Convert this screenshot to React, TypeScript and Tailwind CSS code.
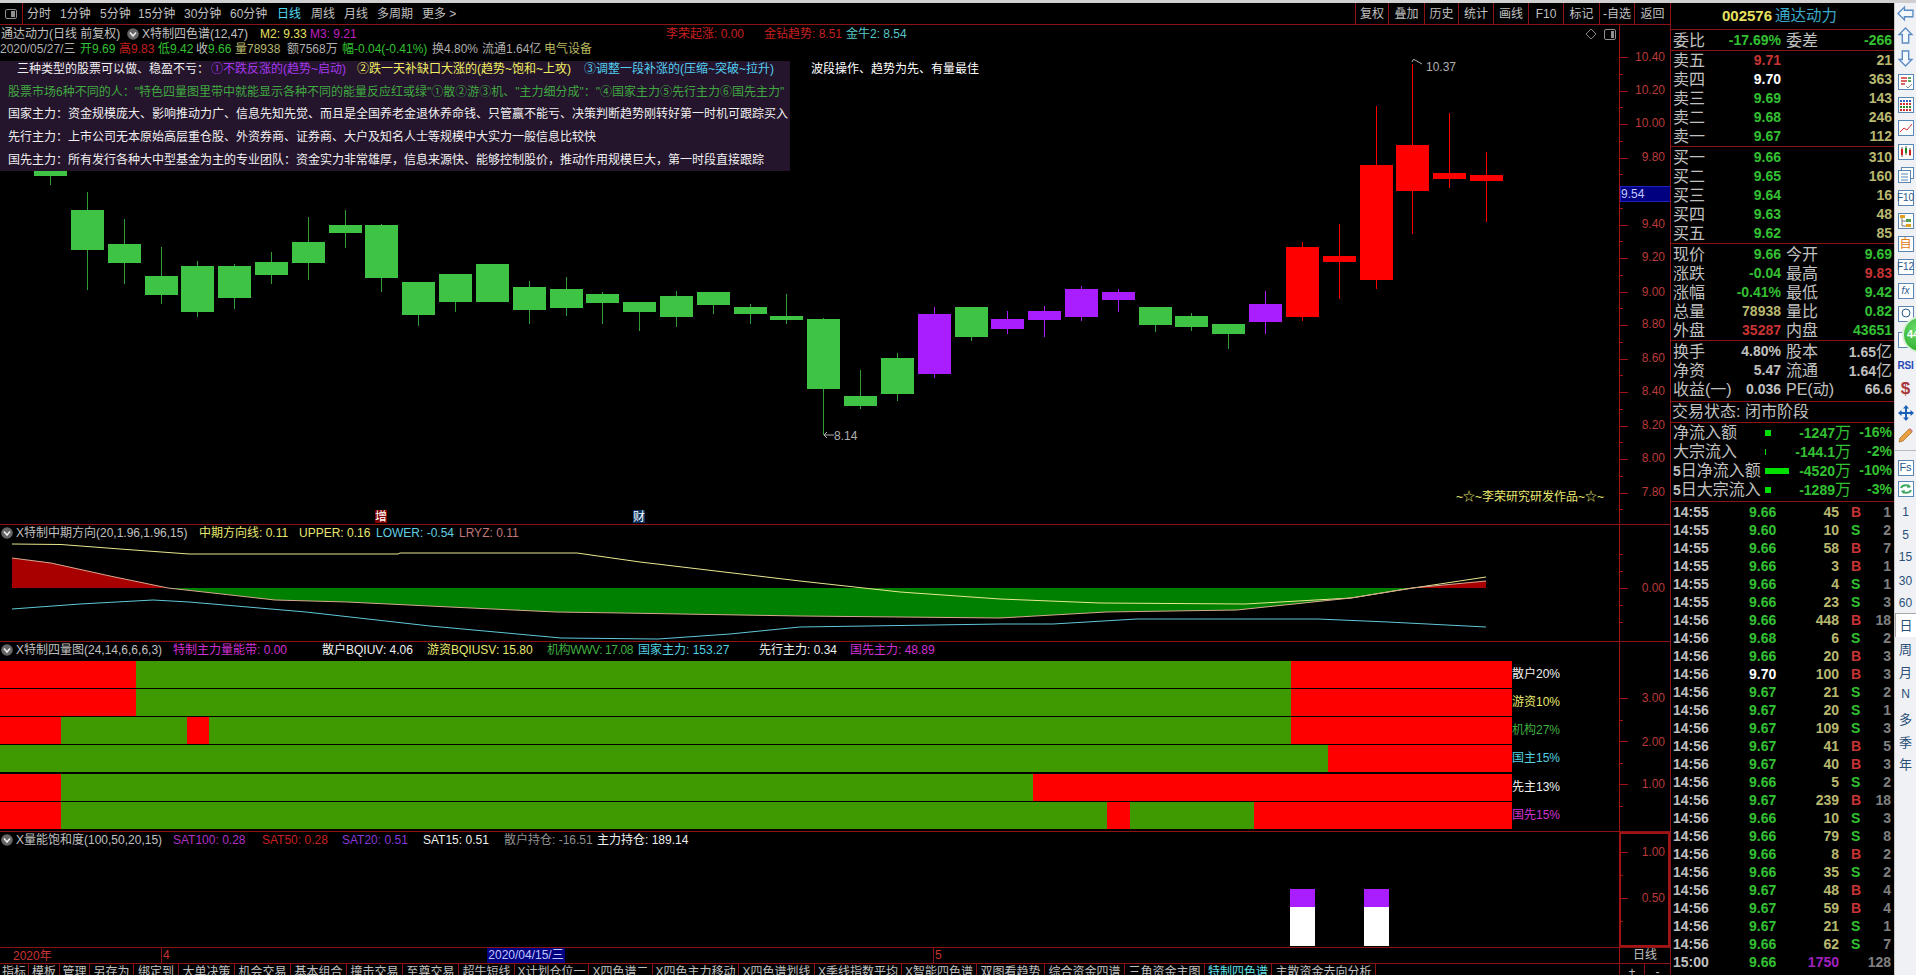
import React from "react";

const C: [number, number, number, number, number, string][] = [
  [34, 171, 176, 165, 185, "g"], [71, 210, 250, 192, 290, "g"], [108, 244, 263, 219, 284, "g"], [145, 276, 295, 247, 304, "g"],
  [181, 266, 312, 261, 317, "g"], [218, 266, 298, 264, 309, "g"], [255, 262, 275, 252, 284, "g"], [292, 242, 263, 217, 280, "g"],
  [329, 225, 233, 210, 248, "g"], [365, 225, 278, 224, 292, "g"], [402, 282, 315, 282, 326, "g"], [439, 274, 302, 274, 312, "g"],
  [476, 264, 302, 264, 302, "g"], [513, 287, 310, 281, 324, "g"], [550, 289, 308, 277, 316, "g"], [586, 294, 303, 292, 324, "g"],
  [623, 302, 312, 302, 331, "g"], [660, 296, 317, 291, 327, "g"], [697, 292, 305, 292, 314, "g"], [734, 307, 314, 304, 324, "g"],
  [770, 316, 320, 294, 324, "g"], [807, 319, 389, 318, 435, "g"], [844, 396, 406, 370, 409, "g"], [881, 358, 394, 353, 401, "g"],
  [918, 314, 374, 307, 378, "p"], [955, 307, 337, 307, 341, "g"], [991, 319, 329, 311, 334, "p"], [1028, 311, 320, 306, 337, "p"],
  [1065, 289, 317, 286, 321, "p"], [1102, 292, 300, 289, 312, "p"], [1139, 307, 325, 307, 332, "g"], [1175, 316, 327, 313, 331, "g"],
  [1212, 324, 334, 324, 349, "g"], [1249, 304, 322, 291, 334, "p"], [1286, 247, 317, 242, 321, "r"], [1323, 256, 262, 224, 299, "r"],
  [1360, 165, 280, 106, 289, "r"], [1396, 145, 191, 64, 234, "r"], [1433, 173, 179, 113, 188, "r"], [1470, 175, 181, 152, 222, "r"],
];
const COL: Record<string, string> = { g: "#3fc345", p: "#a81eff", r: "#ff0000" };

const UP = "M12,544 61,544.5 120,549 189,554 398,554 400,553 577,553 640,562 800,581 900,592 1000,599 1100,603 1245,604 1351,598 1400,590 1486,577";
const MID = "M12,558 51,563 110,576 168,588 275,600 347,602 450,607 556,612 622,613 800,616 1000,618 1106,612 1237,610 1351,598 1412,588 1486,581";
const LOW = "M12,609 80,604 153,600 189,602 306,612 430,626 561,638 658,639 730,634 800,627 1000,624 1053,624 1137,619 1318,619 1388,622 1486,627";

const BARS: [string, number][][] = [
  [["r", 136], ["g", 1155], ["r", 221]],
  [["r", 136], ["g", 1155], ["r", 221]],
  [["r", 61], ["g", 126], ["r", 22], ["g", 1082], ["r", 221]],
  [["g", 1328], ["r", 184]],
  [["r", 61], ["g", 972], ["r", 479]],
  [["r", 61], ["g", 1046], ["r", 23], ["g", 124], ["r", 258]],
];
const BAR_LABELS: [string, string, string][] = [
  ["散户20%", "text-[#f0f0f0]", "mb-[1px]"],
  ["游资10%", "text-[#e8e870]", "mb-[1px]"],
  ["机构27%", "text-[#40b040]", "mb-[1px]"],
  ["国主15%", "text-[#50d0e0]", "mb-[2px]"],
  ["先主13%", "text-[#f0f0f0]", "mb-[1px]"],
  ["国先15%", "text-[#d030d0]", ""],
];

const TABS: [string, number, boolean?][] = [
  ["指标", 29], ["模板", 31], ["管理", 30], ["另存为", 44], ["绑定到", 45], ["大单决策", 56], ["机会交易", 56], ["基本组合", 56],
  ["撞击交易", 56], ["至尊交易", 56], ["超牛短线", 56], ["X计划仓位一", 74], ["X四色谱二", 64], ["X四色主力移动", 86], ["X四色谱划线", 76],
  ["X季线指数平均", 87], ["X智能四色谱", 75], ["双图看趋势", 68], ["综合资金四谱", 80], ["三角资金主图", 80], ["特制四色谱", 67, true], ["主散资金去向分析", 104],
];

const TRADES: [string, string, string, string, string][] = [
  ["14:55", "9.66", "45", "B", "1"], ["14:55", "9.60", "10", "S", "2"], ["14:55", "9.66", "58", "B", "7"], ["14:55", "9.66", "3", "B", "1"],
  ["14:55", "9.66", "4", "S", "1"], ["14:55", "9.66", "23", "S", "3"], ["14:56", "9.66", "448", "B", "18"], ["14:56", "9.68", "6", "S", "2"],
  ["14:56", "9.66", "20", "B", "3"], ["14:56", "9.70", "100", "B", "3"], ["14:56", "9.67", "21", "S", "2"], ["14:56", "9.67", "20", "S", "1"],
  ["14:56", "9.67", "109", "S", "3"], ["14:56", "9.67", "41", "B", "5"], ["14:56", "9.67", "40", "B", "3"], ["14:56", "9.66", "5", "S", "2"],
  ["14:56", "9.67", "239", "B", "18"], ["14:56", "9.66", "10", "S", "3"], ["14:56", "9.66", "79", "S", "8"], ["14:56", "9.66", "8", "B", "2"],
  ["14:56", "9.66", "35", "S", "2"], ["14:56", "9.67", "48", "B", "4"], ["14:56", "9.67", "59", "B", "4"], ["14:56", "9.67", "21", "S", "1"],
  ["14:56", "9.66", "62", "S", "7"], ["15:00", "9.66", "1750", "", "128"],
];

const GREEN = "text-[#33c033]";
const RED = "text-[#c83434]";
const YEL = "text-[#b8b870]";
const GRAY = "text-[#c0c0c0]";

function Axis({ top, h, labels, ticks, active, children }: { top: number; h: number; labels: [number, string][]; ticks: [number, boolean][]; active?: boolean; children?: React.ReactNode }) {
  return (
    <svg width="51" height={h} viewBox={`1619 ${top} 51 ${h}`} className="shrink-0" shapeRendering="crispEdges">
      <line x1="1619.5" x2="1619.5" y1={top} y2={top + h} stroke="#a01414" />
      {ticks.map(([y, major]) => (
        <line key={y} x1="1620" x2={major ? 1628 : 1623} y1={y + 0.5} y2={y + 0.5} stroke="#a01414" />
      ))}
      {labels.map(([y, t]) => (
        <text key={t} x="1665" y={y + 4} textAnchor="end" className="fill-[#b83a3a] text-[12px]" shapeRendering="auto">{t}</text>
      ))}
      {active && <rect x="1620" y={top + 1} width="49" height={h - 2} fill="none" stroke="#a01414" strokeWidth="2" />}
      {children}
    </svg>
  );
}

function Chevron() {
  return (
    <svg width="12" height="12" viewBox="0 0 12 12" className="shrink-0">
      <circle cx="6" cy="6" r="5.8" fill="#666" />
      <path d="M3 4.5 6 8 9 4.5" fill="none" stroke="#eee" strokeWidth="1.6" />
    </svg>
  );
}

function Row4({ a, b, c, d, bc, dc }: { a: string; b: React.ReactNode; c?: string; d?: React.ReactNode; bc: string; dc: string }) {
  return (
    <div className="flex h-[19px] items-center pl-[2px] text-[16px] leading-[19px] whitespace-nowrap">
      <span className={`w-[48px] ${GRAY}`}>{a}</span>
      <span className={`w-[60px] text-right text-[14px] font-bold ${bc}`}>{b}</span>
      <span className={`w-[53px] pl-[5px] ${GRAY}`}>{c}</span>
      <span className={`w-[58px] text-right text-[14px] font-bold ${dc}`}>{d}</span>
    </div>
  );
}

const Yi = () => <span className="text-[16px] font-normal">亿</span>;
const Wan = () => <span className="text-[16px] font-normal">万</span>;

function MoneyRow({ a, bar, v, p }: { a: React.ReactNode; bar: string; v: React.ReactNode; p: string }) {
  return (
    <div className="flex h-[19px] items-center pl-[2px] text-[16px] leading-[19px] whitespace-nowrap">
      <span className={`w-[92px] ${GRAY}`}>{a}</span>
      <span className="flex w-[24px] items-center">
        <span className={`h-[6px] bg-[#00e000] ${bar}`} />
      </span>
      <span className={`w-[62px] text-right text-[14px] font-bold ${GREEN}`}>{v}</span>
      <span className={`w-[41px] text-right text-[14px] font-bold ${GREEN}`}>{p}</span>
    </div>
  );
}

function Box({ children }: { children: React.ReactNode }) {
  return <div className="flex h-[16px] w-[16px] items-center justify-center border border-[#5a86b4] bg-white text-[10px] leading-none text-[#2a5a90]">{children}</div>;
}

const Arrow = ({ d }: { d: string }) => (
  <svg width="17" height="17" viewBox="0 0 16 16"><path d={d} fill="#f4f8fc" stroke="#5a8cc4" strokeWidth="1.3" /></svg>
);

const S = ({ c, children }: { c: string; children: React.ReactNode }) => (
  <div className={`flex items-center justify-center ${c}`}>{children}</div>
);

function Side() {
  return (
    <div className="relative flex w-[22px] shrink-0 flex-col border-l border-[#c8c8c8] bg-[#eff1f5] text-[#2a4f78]">
      <S c="h-[21px]"><Arrow d="M1 8 7 2V5H15V11H7V14Z" /></S>
      <S c="h-[23.2px]"><Arrow d="M8 1 14 7H11V15H5V7H2Z" /></S>
      <S c="h-[23.2px]"><Arrow d="M8 15 14 9H11V1H5V9H2Z" /></S>
      <S c="h-[23.2px]"><svg width="16" height="16" viewBox="0 0 16 16"><rect x=".5" y=".5" width="15" height="15" fill="#fff" stroke="#5a86b4" /><path d="M3 4h6M3 7h6M3 10h4" stroke="#d03030" strokeWidth="1.4" /><path d="M10 4h3M10 7h3" stroke="#2a8a2a" strokeWidth="1.4" /><path d="m8 12 2 2 4-4" stroke="#888" fill="none" /></svg></S>
      <S c="h-[23.2px]"><svg width="16" height="16" viewBox="0 0 16 16"><rect x=".5" y=".5" width="15" height="15" fill="#fff" stroke="#5a86b4" /><path d="M2 4h12" stroke="#3060c0" strokeWidth="2" strokeDasharray="2 1" /><path d="M2 7h12" stroke="#d03030" strokeWidth="2" strokeDasharray="2 1" /><path d="M2 10h12" stroke="#2a8a2a" strokeWidth="2" strokeDasharray="2 1" /><path d="M2 13h12" stroke="#d03030" strokeWidth="2" strokeDasharray="2 1" /></svg></S>
      <S c="h-[23.2px]"><svg width="16" height="16" viewBox="0 0 16 16"><rect x=".5" y=".5" width="15" height="15" fill="#fff" stroke="#5a86b4" /><path d="m2 12 4-4 3 2 5-6" fill="none" stroke="#d03030" /></svg></S>
      <S c="h-[23.2px]"><svg width="16" height="16" viewBox="0 0 16 16"><rect x=".5" y=".5" width="15" height="15" fill="#fff" stroke="#5a86b4" /><path d="M4 3v10M8 2v9M12 4v8" stroke="#555" /><rect x="3" y="5" width="2" height="6" fill="#d02020" /><rect x="7" y="4" width="2" height="5" fill="#208a20" /><rect x="11" y="6" width="2" height="5" fill="#d02020" /></svg></S>
      <S c="h-[23.2px]"><svg width="16" height="16" viewBox="0 0 16 16"><rect x="3.5" y=".5" width="12" height="11" fill="#fff" stroke="#5a86b4" /><rect x=".5" y="3.5" width="12" height="12" fill="#fff" stroke="#5a86b4" /><path d="M3 7h7M3 10h7M3 13h7" stroke="#5a86b4" /></svg></S>
      <S c="h-[23.2px]"><Box>F10</Box></S>
      <S c="h-[23.2px]"><svg width="16" height="16" viewBox="0 0 16 16"><rect x=".5" y=".5" width="15" height="15" fill="#fff" stroke="#5a86b4" /><rect x="2" y="2" width="5" height="3" fill="#e0a020" /><rect x="8" y="6" width="5" height="3" fill="#50a050" /><rect x="8" y="11" width="5" height="3" fill="#e0a020" /><path d="M4 5v8h4M4 8h4" fill="none" stroke="#777" /></svg></S>
      <S c="h-[23.2px]"><div className="flex h-[16px] w-[16px] items-center justify-center border border-[#5a86b4] bg-white text-[12px] leading-none text-[#e07a10]">自</div></S>
      <S c="h-[23.2px]"><Box>F12</Box></S>
      <S c="h-[23.2px]"><Box><span className="italic">fx</span></Box></S>
      <S c="h-[23.2px]"><svg width="16" height="16" viewBox="0 0 16 16"><rect x=".5" y=".5" width="15" height="15" fill="#fff" stroke="#5a86b4" /><circle cx="8" cy="7" r="4" fill="none" stroke="#2a5a90" /></svg></S>
      <S c="h-[30px]"><svg width="16" height="16" viewBox="0 0 16 16"><rect x=".5" y=".5" width="15" height="15" fill="#fff" stroke="#5a86b4" /></svg></S>
      <S c="h-[21px]"><span className="text-[10px] font-bold leading-none tracking-[-0.3px] text-[#2848b8]">RSI</span></S>
      <S c="h-[25px]"><span className="text-[17px] font-bold leading-none text-[#a83838]">$</span></S>
      <S c="h-[24px]"><svg width="16" height="16" viewBox="0 0 16 16"><path d="M8 0 11 3.5H9V7H12.500V5L16 8 12.500 11V9H9V12.500H11L8 16 5 12.500H7V9H3.500V11L0 8 3.500 5V7H7V3.500H5Z" fill="#1b5fb8" /></svg></S>
      <S c="h-[20px]"><svg width="16" height="16" viewBox="0 0 16 16"><path d="M1 15 2 11 11 2 14 5 5 14Z" fill="#e8a040" stroke="#a06a20" strokeWidth=".7" /><path d="m11 2 1-1 3 3-1 1Z" fill="#d08080" /></svg></S>
      <div className="my-[5px] h-[1px] w-full bg-[#b8b8b8]" />
      <S c="h-[23px]"><Box><span className="text-[11px]">Fs</span></Box></S>
      <S c="h-[20px]"><svg width="16" height="16" viewBox="0 0 16 16"><rect x=".5" y=".5" width="15" height="15" fill="#fff" stroke="#5a86b4" /><path d="M3 7a5 4 0 0 1 9-1M13 9a5 4 0 0 1-9 1" fill="none" stroke="#40a860" strokeWidth="2" /><path d="m10 3 3 3-4 1ZM6 13 3 10l4-1Z" fill="#40a860" /></svg></S>
      <S c="h-[26px] text-[12px]">1</S>
      <S c="h-[20px] text-[12px]">5</S>
      <S c="h-[24px] text-[12px]">15</S>
      <S c="h-[24px] text-[12px]">30</S>
      <S c="h-[20px] text-[12px]">60</S>
      <S c="h-[24px] border-t border-l border-[#a8a8a8] bg-white text-[13px]">日</S>
      <S c="h-[24px] text-[13px]">周</S>
      <S c="h-[22px] text-[13px]">月</S>
      <S c="h-[22px] text-[12px]">N</S>
      <S c="h-[28px] text-[13px]">多</S>
      <S c="h-[18px] text-[13px]">季</S>
      <S c="h-[26px] text-[13px]">年</S>
      <div className="absolute top-[313px] left-[7px] flex h-[37px] w-[37px] items-center rounded-full border-2 border-[#d8f0d8] bg-[radial-gradient(circle_at_40%_35%,#6fdc6f,#18a018)] pl-[3px] text-[11px] font-bold text-white">44</div>
    </div>
  );
}

function App() {
  const mainLabels: [number, string][] = [[57, "10.40"], [90, "10.20"], [123, "10.00"], [157, "9.80"], [224, "9.40"], [257, "9.20"], [292, "9.00"], [324, "8.80"], [358, "8.60"], [391, "8.40"], [425, "8.20"], [458, "8.00"], [492, "7.80"]];
  const mainTicks: [number, boolean][] = [];
  for (let i = 0; i < 28; i++) mainTicks.push([Math.round(57 + i * 16.75), i % 2 === 0]);

  return (
    <div className="flex h-[975px] w-[1916px] flex-col overflow-hidden bg-black font-['Liberation_Sans','Noto_Sans_CJK_SC',sans-serif] text-[12px] text-[#c0c0c0]">
      <div className="h-[3px] shrink-0 bg-[#cfcfcf]" />
      <div className="flex min-h-0 flex-1">
        {/* left */}
        <div className="flex w-[1670px] shrink-0 flex-col">
          {/* toolbar */}
          <div className="flex h-[22px] shrink-0 items-center border-b border-[#8c1414] whitespace-nowrap">
            <div className="flex h-full w-[23px] items-center justify-center border-r border-[#8c1414]">
              <div className="flex h-[10px] w-[12px] justify-end rounded-[2px] border border-[#909090]"><span className="m-[1px] w-[4px] bg-[#909090]" /></div>
            </div>
            <div className="flex flex-1 items-center pl-[4px]">
              <span className="w-[33px]">分时</span><span className="w-[40px]">1分钟</span><span className="w-[38px]">5分钟</span><span className="w-[46px]">15分钟</span><span className="w-[46px]">30分钟</span><span className="w-[47px]">60分钟</span>
              <span className="w-[34px] text-[#50d8f0]">日线</span><span className="w-[33px]">周线</span><span className="w-[33px]">月线</span><span className="w-[45px]">多周期</span><span>更多 &gt;</span>
            </div>
            <div className="flex h-full items-center text-center">
              {[["复权", "w-[33px]"], ["叠加", "w-[36px]"], ["历史", "w-[34px]"], ["统计", "w-[35px]"], ["画线", "w-[35px]"], ["F10", "w-[35px]"], ["标记", "w-[36px]"], ["-自选", "w-[35px]"], ["返回", "w-[36px]"]].map(([t, w]) => (
                <span key={t} className={`flex h-full items-center justify-center border-l border-[#8c1414] ${w}`}>{t}</span>
              ))}
            </div>
          </div>

          {/* main panel */}
          <div className="flex h-[500px] shrink-0 border-b border-[#8c1414]">
            <div className="relative w-[1619px] overflow-hidden">
              <svg width="1619" height="499" viewBox="0 25 1619 499" className="absolute inset-0">
                <g shapeRendering="crispEdges">
                  {C.map(([x, t, b, wt, wb, k]) => (
                    <g key={x}>
                      <rect x={x + 16} y={wt} width="1" height={wb - wt} fill={COL[k]} opacity={k === "g" ? 0.8 : 1} />
                      <rect x={x} y={t} width="33" height={b - t} fill={COL[k]} />
                    </g>
                  ))}
                </g>
                <path d="M824 435h10M824 435l3-3M824 435l3 3" stroke="#b0b0b0" fill="none" />
                <text x="834" y="440" className="fill-[#b0b0b0] text-[12px]">8.14</text>
                <path d="M1412 62q1-4 3-2l7 4" stroke="#b0b0b0" fill="none" />
                <text x="1426" y="71" className="fill-[#b0b0b0] text-[12px]">10.37</text>
                <text x="1456" y="501" className="fill-[#e8e870] text-[12px]">~☆~李荣研究研发作品~☆~</text>
                <path d="M1591 29l5 5-5 5-5-5Z" fill="none" stroke="#808080" />
                <rect x="1604.500" y="29.500" width="11" height="10" rx="1.500" fill="none" stroke="#909090" />
                <rect x="1611" y="31" width="3" height="7" fill="#909090" />
                <rect x="375" y="510" width="12" height="13" fill="#800000" />
                <text x="375" y="521" className="fill-white text-[12px]">增</text>
                <rect x="633" y="510" width="12" height="13" fill="#0a3060" />
                <text x="633" y="521" className="fill-white text-[12px]">财</text>
              </svg>
              <div className="relative flex h-[16px] items-center whitespace-nowrap pt-[2px]">
                <span className="w-[127px] pl-[1px]">通达动力(日线 前复权)</span>
                <Chevron />
                <span className="w-[121px] pl-[3px]">X特制四色谱(12,47)</span>
                <span className="w-[50px] text-[#e8e060]">M2: 9.33</span>
                <span className="w-[356px] text-[#c020c0]">M3: 9.21</span>
                <span className="w-[98px] text-[#c82020]">李荣起涨: 0.00</span>
                <span className="w-[82px] text-[#c82020]">金钻趋势: 8.51</span>
                <span className="text-[#58c8c8]">金牛2: 8.54</span>
              </div>
              <div className="relative flex h-[14px] items-center whitespace-nowrap pt-[1px] leading-[14px]">
                <span className="w-[80px] text-[#b0b0b0]">2020/05/27/三</span>
                <span className="w-[39px] text-[#33c033]">开9.69</span>
                <span className="w-[39px] text-[#c82020]"><span>高</span>9.83</span>
                <span className="w-[38px] text-[#33c033]">低9.42</span>
                <span className="w-[39px] text-[#33c033]"><span className="text-[#c0c0c0]">收</span>9.66</span>
                <span className="w-[52px] text-[#b8b870]">量78938</span>
                <span className="w-[55px] text-[#b0b0b0]">额7568万</span>
                <span className="w-[90px] text-[#33c033]">幅-0.04(-0.41%)</span>
                <span className="w-[50px] text-[#b0b0b0]">换4.80%</span>
                <span className="w-[62px] text-[#b0b0b0]">流通1.64亿</span>
                <span className="text-[#b8b860]">电气设备</span>
              </div>
              <div className="relative mt-[6px] flex">
                <div className="flex h-[110px] w-[790px] flex-col gap-[6.7px] bg-[#24142c] pl-[8px] leading-[16px] whitespace-nowrap text-[#f0f0f0]">
                  <div className="flex pl-[9px]">
                    <span className="w-[194px]">{"三种类型的股票可以做、稳盈不亏\uFF1A"}</span>
                    <span className="w-[146px] text-[#a838f0]">①不跌反涨的(趋势~启动)</span>
                    <span className="w-[227px] text-[#f0f060]">②跌一天补缺口大涨的(趋势~饱和~上攻)</span>
                    <span className="text-[#50d0f0]">③调整一段补涨的(压缩~突破~拉升)</span>
                  </div>
                  <div className="text-[#40a840]">{"股票市场6种不同的人\uFF1A\"特色四量图里带中就能显示各种不同的能量反应红或绿\"①散②游③机、\"主力细分成\"\uFF1A\"④国家主力⑤先行主力⑥国先主力\""}</div>
                  <div>{"国家主力\uFF1A资金规模庞大、影响推动力广、信息先知先觉、而且是全国养老金退休养命钱、只管赢不能亏、决策判断趋势刚转好第一时机可跟踪买入"}</div>
                  <div>{"先行主力\uFF1A上市公司无本原始高层重仓股、外资券商、证券商、大户及知名人士等规模中大实力一般信息比较快"}</div>
                  <div>{"国先主力\uFF1A所有发行各种大中型基金为主的专业团队\uFF1A资金实力非常雄厚\uFF0C信息来源快、能够控制股价\uFF0C推动作用规模巨大\uFF0C第一时段直接跟踪"}</div>
                </div>
                <div className="ml-[21px] h-[16px] leading-[16px] whitespace-nowrap text-white">波段操作、趋势为先、有量最佳</div>
              </div>
            </div>
            <Axis top={25} h={499} labels={mainLabels} ticks={mainTicks}>
              <rect x="1620" y="186" width="50" height="15" fill="#000080" stroke="#2020c0" />
              <text x="1621" y="198" className="fill-[#c0c8ff] text-[12px]" shapeRendering="auto">9.54</text>
            </Axis>
          </div>

          {/* panel 2 */}
          <div className="flex h-[117px] shrink-0 border-b border-[#8c1414]">
            <div className="relative w-[1619px]">
              <svg width="1619" height="116" viewBox="0 525 1619 116" className="absolute inset-0">
                <path d="M12,558 51,563 110,576 168,588 12,588Z" fill="#a80000" />
                <path d="M168,588 275,600 347,602 450,607 556,612 622,613 800,616 1000,618 1106,612 1237,610 1351,598 1412,588Z" fill="#008000" />
                <path d="M1412,588 1486,581 1486,588Z" fill="#a80000" />
                <path d={UP} fill="none" stroke="#e8e890" />
                <path d={MID} fill="none" stroke="#d8a890" />
                <path d={LOW} fill="none" stroke="#60c8d8" />
              </svg>
              <div className="relative flex h-[16px] items-center whitespace-nowrap pl-[1px]">
                <Chevron />
                <span className="w-[186px] pl-[3px]">X特制中期方向(20,1.96,1.96,15)</span>
                <span className="w-[100px] text-[#e8e870]">中期方向线: 0.11</span>
                <span className="w-[77px] text-[#e8e870]">UPPER: 0.16</span>
                <span className="w-[83px] text-[#60d0e0]">LOWER: -0.54</span>
                <span className="text-[#c07878]">LRYZ: 0.11</span>
              </div>
            </div>
            <Axis top={525} h={116} labels={[[588, "0.00"]]} ticks={[[554, false], [571, false], [588, true], [605, false], [622, false]]} />
          </div>

          {/* panel 3 */}
          <div className="flex h-[190px] shrink-0 border-b border-[#8c1414]">
            <div className="w-[1619px]">
              <div className="flex h-[16px] items-center whitespace-nowrap pl-[1px]">
                <Chevron />
                <span className="w-[160px] pl-[3px]">X特制四量图(24,14,6,6,6,3)</span>
                <span className="w-[149px] text-[#d030d0]">特制主力量能带: 0.00</span>
                <span className="w-[105px] text-[#f0f0f0]">散户BQIUV: 4.06</span>
                <span className="w-[120px] text-[#e8e870]">游资BQIUSV: 15.80</span>
                <span className="w-[91px] tracking-[-0.4px] text-[#40b040]">机构WWV: 17.08</span>
                <span className="w-[121px] text-[#50d0e0]">国家主力: 153.27</span>
                <span className="w-[91px] text-[#f0f0f0]">先行主力: 0.34</span>
                <span className="text-[#d030d0]">国先主力: 48.89</span>
              </div>
              <div className="mt-[3px] flex flex-col">
                {BARS.map((row, i) => (
                  <div key={i} className={`flex h-[27px] ${BAR_LABELS[i][2]}`}>
                    {row.map(([c, w], j) => (
                      <div key={j} className={c === "r" ? "bg-[#ff0000]" : "bg-[#3f9900]"} style={{ width: w }} />
                    ))}
                    <span className={`leading-[27px] whitespace-nowrap ${BAR_LABELS[i][1]}`}>{BAR_LABELS[i][0]}</span>
                  </div>
                ))}
              </div>
            </div>
            <Axis top={642} h={189} labels={[[698, "3.00"], [742, "2.00"], [784, "1.00"]]} ticks={[[698, true], [720, false], [741, true], [763, false], [784, true], [806, false]]} />
          </div>

          {/* panel 4 */}
          <div className="flex h-[116px] shrink-0 border-b border-[#8c1414]">
            <div className="relative w-[1619px]">
              <svg width="1619" height="115" viewBox="0 832 1619 115" className="absolute inset-0" shapeRendering="crispEdges">
                <rect x="1290" y="889" width="25" height="18" fill="#a81eff" />
                <rect x="1290" y="907" width="25" height="39" fill="#fff" />
                <rect x="1364" y="889" width="25" height="18" fill="#a81eff" />
                <rect x="1364" y="907" width="25" height="39" fill="#fff" />
              </svg>
              <div className="relative flex h-[16px] items-center whitespace-nowrap pl-[1px]">
                <Chevron />
                <span className="w-[160px] pl-[3px]">X量能饱和度(100,50,20,15)</span>
                <span className="w-[89px] text-[#b030c0]">SAT100: 0.28</span>
                <span className="w-[80px] text-[#c82020]">SAT50: 0.28</span>
                <span className="w-[81px] text-[#8a38d8]">SAT20: 0.51</span>
                <span className="w-[81px] text-[#f0f0f0]">SAT15: 0.51</span>
                <span className="w-[93px] text-[#909090]">散户持仓: -16.51</span>
                <span className="text-[#f0f0f0]">主力持仓: 189.14</span>
              </div>
            </div>
            <Axis top={832} h={115} labels={[[852, "1.00"], [898, "0.50"]]} ticks={[[852, true], [875, false], [898, true], [921, false]]} active />
          </div>

          {/* time axis */}
          <div className="flex h-[16px] shrink-0 items-center border-b border-[#8c1414] whitespace-nowrap text-[#c83434]">
            <span className="w-[161px] pl-[13px]">2020年</span>
            <span className="h-full w-[326px] border-l border-[#8c1414] pl-[1px] leading-[15px]">4</span>
            <span className="h-full w-[78px] bg-[#000080] text-center leading-[15px] text-[#c0c8ff]">2020/04/15/三</span>
            <span className="w-[368px]" />
            <span className="h-full w-[686px] border-l border-[#8c1414] pl-[1px] leading-[15px]">5</span>
            <span className="h-full w-[51px] border-l border-[#a01414] text-center leading-[15px] text-[#c0c0c0]">日线</span>
          </div>

          {/* tabs */}
          <div className="flex h-[11px] shrink-0 overflow-hidden leading-[16px] whitespace-nowrap">
            {TABS.map(([t, w, act]) => (
              <span key={t} className={`shrink-0 border-r border-[#8c1414] text-center ${act ? "text-[#60e0e8]" : ""}`} style={{ width: w }}>{t}</span>
            ))}
            <span className="w-[243px]" />
            <span className="w-[26px] border-l border-r border-[#8c1414] text-center">+</span>
            <span className="w-[25px] text-center">-</span>
          </div>
        </div>

        {/* right */}
        <div className="flex w-[224px] shrink-0 flex-col border-l border-[#8c1414]">
          <div className="flex h-[27px] shrink-0 items-center border-b border-[#8c1414] pl-[51px] whitespace-nowrap">
            <span className="w-[53px] text-[15px] font-bold text-[#e8e060]">002576</span>
            <span className="text-[15.500px] text-[#3ca8c8]">通达动力</span>
          </div>
          <div className="flex h-[21px] shrink-0 items-center border-b border-[#8c1414]">
            <Row4 a="委比" b="-17.69%" c="委差" d="-266" bc={GREEN} dc={GREEN} />
          </div>
          <div className="flex h-[96px] shrink-0 flex-col border-b border-[#8c1414]">
            <Row4 a="卖五" b="9.71" d="21" bc={RED} dc={YEL} />
            <Row4 a="卖四" b="9.70" d="363" bc="text-white" dc={YEL} />
            <Row4 a="卖三" b="9.69" d="143" bc={GREEN} dc={YEL} />
            <Row4 a="卖二" b="9.68" d="246" bc={GREEN} dc={YEL} />
            <Row4 a="卖一" b="9.67" d="112" bc={GREEN} dc={YEL} />
          </div>
          <div className="flex h-[97px] shrink-0 flex-col justify-center border-b border-[#8c1414]">
            <Row4 a="买一" b="9.66" d="310" bc={GREEN} dc={YEL} />
            <Row4 a="买二" b="9.65" d="160" bc={GREEN} dc={YEL} />
            <Row4 a="买三" b="9.64" d="16" bc={GREEN} dc={YEL} />
            <Row4 a="买四" b="9.63" d="48" bc={GREEN} dc={YEL} />
            <Row4 a="买五" b="9.62" d="85" bc={GREEN} dc={YEL} />
          </div>
          <div className="flex h-[97px] shrink-0 flex-col justify-center border-b border-[#8c1414]">
            <Row4 a="现价" b="9.66" c="今开" d="9.69" bc={GREEN} dc={GREEN} />
            <Row4 a="涨跌" b="-0.04" c="最高" d="9.83" bc={GREEN} dc={RED} />
            <Row4 a="涨幅" b="-0.41%" c="最低" d="9.42" bc={GREEN} dc={GREEN} />
            <Row4 a="总量" b="78938" c="量比" d="0.82" bc={YEL} dc={GREEN} />
            <Row4 a="外盘" b="35287" c="内盘" d="43651" bc={RED} dc={GREEN} />
          </div>
          <div className="flex h-[61px] shrink-0 flex-col border-b border-[#8c1414] pt-[1px]">
            <Row4 a="换手" b="4.80%" c="股本" d={<>1.65<Yi /></>} bc={GRAY} dc={GRAY} />
            <Row4 a="净资" b="5.47" c="流通" d={<>1.64<Yi /></>} bc={GRAY} dc={GRAY} />
            <Row4 a="收益(一)" b="0.036" c="PE(动)" d="66.6" bc={GRAY} dc={GRAY} />
          </div>
          <div className="flex h-[21px] shrink-0 items-center border-b border-[#8c1414] pl-[1px] text-[16px] whitespace-nowrap">交易状态: 闭市阶段</div>
          <div className="flex h-[79px] shrink-0 flex-col border-b border-[#8c1414]">
            <MoneyRow a="净流入额" bar="w-[6px]" v={<>-1247<Wan /></>} p="-16%" />
            <MoneyRow a="大宗流入" bar="w-[1px]" v={<>-144.1<Wan /></>} p="-2%" />
            <MoneyRow a={<><b className="text-[14px]">5</b>日净流入额</>} bar="w-[24px]" v={<>-4520<Wan /></>} p="-10%" />
            <MoneyRow a={<><b className="text-[14px]">5</b>日大宗流入</>} bar="w-[6px]" v={<>-1289<Wan /></>} p="-3%" />
          </div>
          <div className="flex flex-col pt-[1px] text-[14px] font-bold whitespace-nowrap">
            {TRADES.map((r, i) => (
              <div key={i} className="flex h-[18px] items-center pl-[2px] leading-[18px]">
                <span className="w-[76px] text-[#c0c0c0]">{r[0]}</span>
                <span className={`w-[40px] ${r[1] === "9.70" ? "text-white" : GREEN}`}>{r[1]}</span>
                <span className={`w-[50px] text-right ${r[2] === "1750" ? "text-[#a020c0]" : YEL}`}>{r[2]}</span>
                <span className={`w-[12px] pl-[12px] ${r[3] === "B" ? RED : GREEN}`}>{r[3]}</span>
                <span className="w-[40px] text-right text-[#808080]">{r[4]}</span>
              </div>
            ))}
          </div>
        </div>
        <Side />
      </div>
    </div>
  );
}

export default App;
